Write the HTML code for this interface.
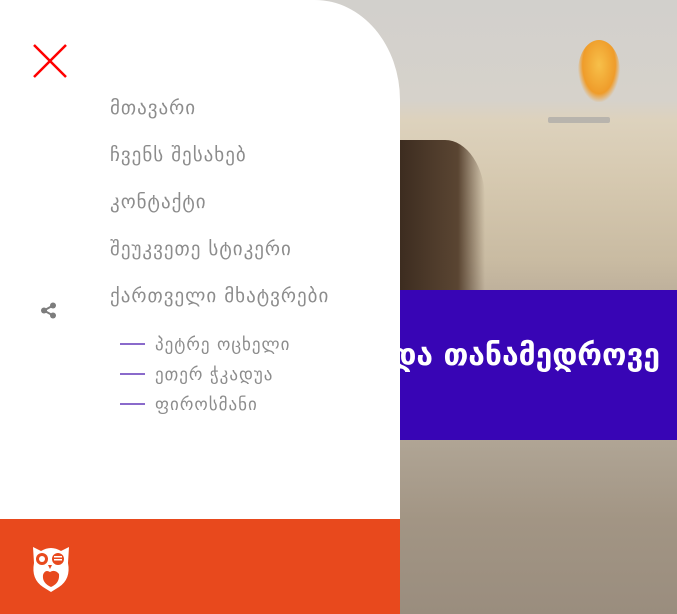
<!DOCTYPE html>
<html><head><meta charset="utf-8"><style>
*{margin:0;padding:0;box-sizing:border-box}
body{width:677px;height:614px;overflow:hidden;position:relative;font-family:"DejaVu Sans","Liberation Sans",sans-serif;background:#c9c0b0}
.bg{position:absolute;left:0;top:0;width:677px;height:614px;
background:linear-gradient(180deg,#d2d0cc 0px,#d6d2cb 100px,#ddd2bd 120px,#d6c9b0 180px,#c9bba2 260px,#bfb19c 290px,#b0a595 440px,#a29584 520px,#9a8d7e 614px)}
.obj{position:absolute;left:395px;top:140px;width:90px;height:150px;background:linear-gradient(90deg,#3a2a1e 0,#4d3a2a 40%,#5a4532 70%,rgba(90,70,50,0) 100%);border-top-right-radius:40px 60px}
.fire{position:absolute;left:578px;top:40px;width:42px;height:62px;border-radius:50% 50% 40% 40%;background:radial-gradient(ellipse at 50% 40%,#f7c04a,#ef9c2a 55%,rgba(230,150,50,0) 72%)}
.ship{position:absolute;left:548px;top:117px;width:62px;height:6px;background:#b8b4ad;border-radius:2px}
.band{position:absolute;left:300px;top:290px;width:377px;height:150px;background:#3805b5}
.band span{position:absolute;right:17px;top:48px;color:#fff;font-size:30px;font-weight:bold;white-space:nowrap}
.panel{position:absolute;left:0;top:0;width:400px;height:519px;background:#fff;border-top-right-radius:85px 100px}
.foot{position:absolute;left:0;top:519px;width:400px;height:95px;background:#e8491d}
.x{position:absolute;left:33px;top:44px}
.m{position:absolute;left:110px;color:#8c8c8c;font-size:19px;letter-spacing:1px;white-space:nowrap}
.s{position:absolute;left:155px;color:#8c8c8c;font-size:17px;letter-spacing:1px;white-space:nowrap}
.l{position:absolute;left:120px;width:25px;height:2px;background:#8a6acb}
</style></head><body>
<div class="bg"></div>
<div class="fire"></div><div class="ship"></div>
<div class="obj"></div>
<div class="band"><span>და თანამედროვე</span></div>
<div class="panel"></div>
<svg class="x" width="34" height="34" viewBox="0 0 34 34"><path d="M1 1L33 33M33 1L1 33" stroke="#f00" stroke-width="2.5"/></svg>
<div class="m" style="top:97px">მთავარი</div>
<div class="m" style="top:144px">ჩვენს შესახებ</div>
<div class="m" style="top:191px">კონტაქტი</div>
<div class="m" style="top:238px">შეუკვეთე სტიკერი</div>
<div class="m" style="top:285px">ქართველი მხატვრები</div>
<svg style="position:absolute;left:40px;top:302px" width="17" height="17" viewBox="0 0 17 17"><circle cx="13" cy="3.5" r="3" fill="#7d7d7d"/><circle cx="4" cy="8.5" r="3" fill="#7d7d7d"/><circle cx="13" cy="13.5" r="3" fill="#7d7d7d"/><path d="M13 3.5L4 8.5L13 13.5" stroke="#7d7d7d" stroke-width="2" fill="none"/></svg>
<div class="l" style="top:343px"></div><div class="s" style="top:335px">პეტრე ოცხელი</div>
<div class="l" style="top:373px"></div><div class="s" style="top:365px">ეთერ ჭკადუა</div>
<div class="l" style="top:403px"></div><div class="s" style="top:395px">ფიროსმანი</div>
<div class="foot"></div>
<svg style="position:absolute;left:31px;top:545px" width="40" height="48" viewBox="0 0 40 48">
<path d="M2 2L10 6Q20 0 30 6L38 2L37 18Q40 34 28 42L20 47L12 42Q0 34 3 18Z" fill="#fff"/>
<circle cx="11" cy="14" r="6" fill="#e8491d"/><circle cx="11" cy="14" r="3" fill="#fff"/>
<circle cx="27" cy="14" r="6" fill="#e8491d"/><rect x="23" y="11" width="8" height="1.5" fill="#fff"/><rect x="23" y="14" width="8" height="1.5" fill="#fff"/>
<path d="M17 20L19 24L21 20Z" fill="#e8491d"/>
<path d="M12 30Q14 24 19 27Q24 24 28 29Q29 38 20 42Q11 38 12 30Z" fill="#e8491d"/>
</svg>
</body></html>
